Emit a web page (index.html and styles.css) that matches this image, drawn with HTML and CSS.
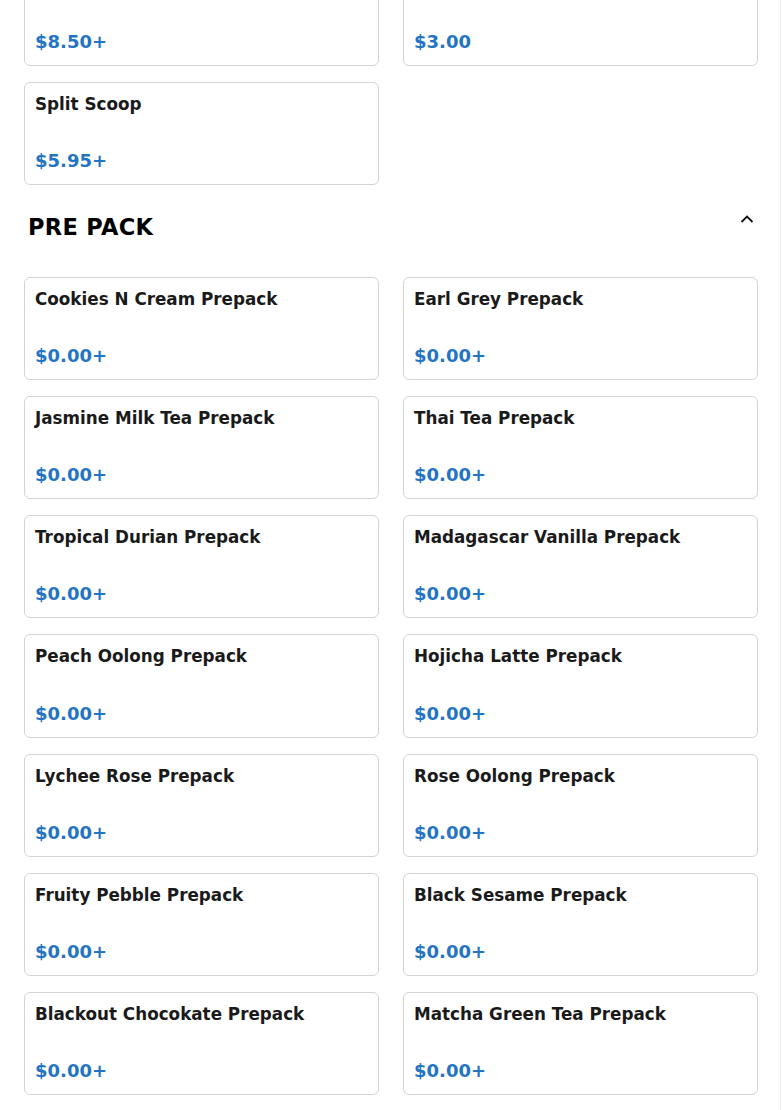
FILE: index.html
```html
<!DOCTYPE html>
<html>
<head>
<meta charset="utf-8">
<link rel="stylesheet" href="styles.css">
</head>
<body>
<div class="page">
  <div class="grid grid-top">
    <div class="card"><div class="title"></div><div class="price">$8.50+</div></div>
    <div class="card"><div class="title"></div><div class="price">$3.00</div></div>
    <div class="card"><div class="title">Split Scoop</div><div class="price">$5.95+</div></div>
  </div>
  <div class="section-head">
    <h2 class="section-title">PRE PACK</h2>
    <svg class="chev" width="14" height="10" viewBox="0 0 14 10"><polyline points="1.5,8 7,2.5 12.5,8" fill="none" stroke="#111" stroke-width="1.8"/></svg>
  </div>
  <div class="grid">
    <div class="card"><div class="title">Cookies N Cream Prepack</div><div class="price">$0.00+</div></div>
    <div class="card"><div class="title">Earl Grey Prepack</div><div class="price">$0.00+</div></div>
    <div class="card"><div class="title">Jasmine Milk Tea Prepack</div><div class="price">$0.00+</div></div>
    <div class="card"><div class="title">Thai Tea Prepack</div><div class="price">$0.00+</div></div>
    <div class="card"><div class="title">Tropical Durian Prepack</div><div class="price">$0.00+</div></div>
    <div class="card"><div class="title">Madagascar Vanilla Prepack</div><div class="price">$0.00+</div></div>
    <div class="card"><div class="title">Peach Oolong Prepack</div><div class="price">$0.00+</div></div>
    <div class="card"><div class="title">Hojicha Latte Prepack</div><div class="price">$0.00+</div></div>
    <div class="card"><div class="title">Lychee Rose Prepack</div><div class="price">$0.00+</div></div>
    <div class="card"><div class="title">Rose Oolong Prepack</div><div class="price">$0.00+</div></div>
    <div class="card"><div class="title">Fruity Pebble Prepack</div><div class="price">$0.00+</div></div>
    <div class="card"><div class="title">Black Sesame Prepack</div><div class="price">$0.00+</div></div>
    <div class="card"><div class="title">Blackout Chocokate Prepack</div><div class="price">$0.00+</div></div>
    <div class="card"><div class="title">Matcha Green Tea Prepack</div><div class="price">$0.00+</div></div>
  </div>
</div>
</body>
</html>
```
FILE: styles.css
```css
html, body {
  margin: 0;
  padding: 0;
  background: #fff;
  overflow: hidden;
}
.page {
  width: 780px;
  border-right: 1px solid #f0f0f0;
  font-family: "DejaVu Sans", sans-serif;
  color: #1a1a1a;
  height: 1110px;
  overflow: hidden;
}
.grid {
  display: grid;
  grid-template-columns: 355px 355px;
  column-gap: 24px;
  row-gap: 16px;
  padding: 0 24px;
}
.grid-top {
  margin-top: -37px;
}
.card {
  box-sizing: border-box;
  height: 103.1px;
  border: 1px solid #d4d4d4;
  border-radius: 6px;
  padding: 10px 10px 11px;
  display: flex;
  flex-direction: column;
  justify-content: space-between;
  background: #fff;
}
.title {
  font-size: 16.8px;
  font-weight: bold;
  line-height: 22px;
  color: #1a1a1a;
  min-height: 22px;
}
.price {
  font-size: 18px;
  font-weight: bold;
  line-height: 24px;
  color: #2474c4;
}
.section-head {
  display: flex;
  justify-content: space-between;
  align-items: flex-start;
  padding: 28px 26px 36px 28px;
}
.section-title {
  margin: 0;
  font-size: 22.5px;
  line-height: 28px;
  font-weight: bold;
  color: #000;
  letter-spacing: 0.3px;
}
.chev {
  margin-top: 1px;
}
```
